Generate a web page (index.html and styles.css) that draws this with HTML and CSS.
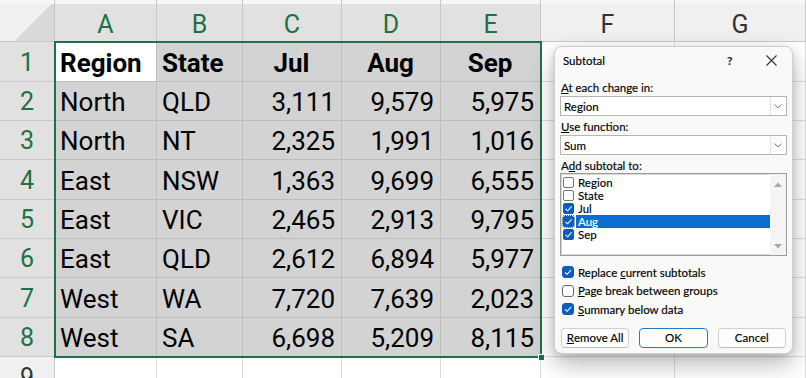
FILE: index.html
```html
<!DOCTYPE html>
<html>
<head>
<meta charset="utf-8">
<link rel="stylesheet" href="styles.css">
</head>
<body>
<div class="sheet">
  <div class="grid">
    <div class="corner"></div>
    <div class="ch">A</div><div class="ch">B</div><div class="ch">C</div><div class="ch">D</div><div class="ch">E</div><div class="ch off">F</div><div class="ch off">G</div>

    <div class="rh">1</div>
    <div class="c act b">Region</div><div class="c b">State</div><div class="c b ctr">Jul</div><div class="c b ctr">Aug</div><div class="c b ctr">Sep</div><div class="e"></div><div class="e"></div>

    <div class="rh">2</div>
    <div class="c">North</div><div class="c">QLD</div><div class="c n">3,111</div><div class="c n">9,579</div><div class="c n">5,975</div><div class="e"></div><div class="e"></div>

    <div class="rh">3</div>
    <div class="c">North</div><div class="c">NT</div><div class="c n">2,325</div><div class="c n">1,991</div><div class="c n">1,016</div><div class="e"></div><div class="e"></div>

    <div class="rh">4</div>
    <div class="c">East</div><div class="c">NSW</div><div class="c n">1,363</div><div class="c n">9,699</div><div class="c n">6,555</div><div class="e"></div><div class="e"></div>

    <div class="rh">5</div>
    <div class="c">East</div><div class="c">VIC</div><div class="c n">2,465</div><div class="c n">2,913</div><div class="c n">9,795</div><div class="e"></div><div class="e"></div>

    <div class="rh">6</div>
    <div class="c">East</div><div class="c">QLD</div><div class="c n">2,612</div><div class="c n">6,894</div><div class="c n">5,977</div><div class="e"></div><div class="e"></div>

    <div class="rh">7</div>
    <div class="c">West</div><div class="c">WA</div><div class="c n">7,720</div><div class="c n">7,639</div><div class="c n">2,023</div><div class="e"></div><div class="e"></div>

    <div class="rh">8</div>
    <div class="c">West</div><div class="c">SA</div><div class="c n">6,698</div><div class="c n">5,209</div><div class="c n">8,115</div><div class="e"></div><div class="e"></div>

    <div class="rh off">9</div>
    <div class="e"></div><div class="e"></div><div class="e"></div><div class="e"></div><div class="e"></div><div class="e"></div><div class="e"></div>
  </div>

  <div class="selection"><span class="handle"></span></div>

  <div class="dlg">
    <div class="dlg-title">
      <span class="dlg-name">Subtotal</span>
      <span class="dlg-help">?</span>
      <svg class="dlg-close" width="11" height="11" viewBox="0 0 11 11"><path d="M0.5 0.5 L10.5 10.5 M10.5 0.5 L0.5 10.5" stroke="#333" stroke-width="1.1" fill="none"/></svg>
    </div>
    <div class="dlg-body">
      <div class="lbl l1"><u>A</u>t each change in:</div>
      <div class="select"><span class="val">Region</span><span class="dd"><svg width="8" height="5" viewBox="0 0 8 5"><path d="M0.5 0.5 L4 4 L7.5 0.5" stroke="#777" stroke-width="1" fill="none"/></svg></span></div>
      <div class="lbl"><u>U</u>se function:</div>
      <div class="select"><span class="val">Sum</span><span class="dd"><svg width="8" height="5" viewBox="0 0 8 5"><path d="M0.5 0.5 L4 4 L7.5 0.5" stroke="#777" stroke-width="1" fill="none"/></svg></span></div>
      <div class="lbl">A<u>d</u>d subtotal to:</div>
      <div class="list">
        <div class="items">
          <div class="item"><span class="cb"></span><span class="txt">Region</span></div>
          <div class="item"><span class="cb"></span><span class="txt">State</span></div>
          <div class="item"><span class="cb on"><svg width="11" height="11" viewBox="0 0 11 11"><path d="M2.5 5.8 L4.6 7.8 L8.6 3.4" stroke="#fff" stroke-width="1.1" fill="none"/></svg></span><span class="txt">Jul</span></div>
          <div class="item"><span class="cb on focus"><svg width="11" height="11" viewBox="0 0 11 11"><path d="M2.5 5.8 L4.6 7.8 L8.6 3.4" stroke="#fff" stroke-width="1.1" fill="none"/></svg></span><span class="txt hl">Aug</span></div>
          <div class="item"><span class="cb on"><svg width="11" height="11" viewBox="0 0 11 11"><path d="M2.5 5.8 L4.6 7.8 L8.6 3.4" stroke="#fff" stroke-width="1.1" fill="none"/></svg></span><span class="txt">Sep</span></div>
        </div>
        <div class="sb">
          <svg width="8" height="5" viewBox="0 0 8 5"><path d="M0 5 L4 0.5 L8 5 Z" fill="#a8a8a8"/></svg>
          <svg width="8" height="5" viewBox="0 0 8 5"><path d="M0 0 L4 4.5 L8 0 Z" fill="#a8a8a8"/></svg>
        </div>
      </div>
      <div class="opts">
        <div class="opt"><span class="cb2 on"><svg width="12" height="12" viewBox="0 0 12 12"><path d="M3 6.3 L5.1 8.3 L9.2 3.9" stroke="#fff" stroke-width="1.1" fill="none"/></svg></span><span>Replace <u>c</u>urrent subtotals</span></div>
        <div class="opt"><span class="cb2"></span><span><u>P</u>age break between groups</span></div>
        <div class="opt"><span class="cb2 on"><svg width="12" height="12" viewBox="0 0 12 12"><path d="M3 6.3 L5.1 8.3 L9.2 3.9" stroke="#fff" stroke-width="1.1" fill="none"/></svg></span><span><u>S</u>ummary below data</span></div>
      </div>
      <div class="btns">
        <div class="btn"><u>R</u>emove All</div>
        <div class="btn primary">OK</div>
        <div class="btn">Cancel</div>
      </div>
    </div>
  </div>
</div>
</body>
</html>
```
FILE: styles.css
```css
* { box-sizing: border-box; }
html, body { margin: 0; padding: 0; }
body {
  width: 806px;
  height: 378px;
  overflow: hidden;
  background: #fff;
  font-family: Roboto, "Liberation Sans", sans-serif;
}
.sheet {
  position: relative;
  width: 806px;
  height: 378px;
  overflow: hidden;
}
.grid {
  display: grid;
  grid-template-columns: 55px 102px 86px 99px 99px 100px 134px 131px;
  grid-template-rows: 42px 40px 39px 39px 40px 39px 39px 40px 39px 40px;
}
.grid > div {
  display: flex;
  align-items: center;
  white-space: nowrap;
  overflow: hidden;
  border-right: 1px solid #dcdcdc;
  border-bottom: 1px solid #dcdcdc;
}
.corner {
  background: linear-gradient(135deg, #f0f0f0 0 58%, #d9d9d9 58%);
  border-color: #c8c8c8 !important;
  box-shadow: inset 0 4px 0 #f6f6f6;
}
.ch {
  justify-content: center;
  background: #e1e1e1;
  color: #1e7145;
  font-size: 25px;
  padding-top: 7px;
  border-color: #c8c8c8 !important;
  box-shadow: inset 0 4px 0 #f6f6f6;
}
.ch.off {
  background: #f0f0f0;
  color: #333;
}
.rh {
  justify-content: center;
  background: #e1e1e1;
  color: #1e7145;
  font-size: 25px;
  padding-top: 1px;
  border-color: #c8c8c8 !important;
}
.rh.off {
  background: #f0f0f0;
  color: #333;
}
.c {
  background: #d3d3d3;
  border-color: #bdbdbd !important;
  color: #000;
  font-size: 26px;
  padding: 2px 6px 0 5px;
}
.c.act { background: #fff; }
.c.n { justify-content: flex-end; }
.c.b { font-weight: 700; }
.c.ctr { justify-content: center; }
.e { background: #fff; }

.selection {
  position: absolute;
  left: 54px;
  top: 41px;
  width: 488px;
  height: 317px;
  border: 2px solid #1e7145;
}
.handle {
  position: absolute;
  right: -5px;
  bottom: -5px;
  width: 7px;
  height: 7px;
  background: #1e7145;
  border: 1px solid #fff;
}

/* dialog */
.dlg {
  position: absolute;
  left: 554px;
  top: 46px;
  width: 239px;
  height: 308px;
  background: #f9f9f8;
  border: 1px solid #cfcfcf;
  border-radius: 8px;
  box-shadow: 0 10px 24px rgba(0,0,0,0.28), 0 2px 6px rgba(0,0,0,0.12);
  font-family: Lato, "Liberation Sans", sans-serif;
  font-size: 11.5px;
  color: #000;
  -webkit-text-stroke: 0.15px #000;
}
.dlg-title {
  display: flex;
  align-items: center;
  height: 27px;
  padding: 0 0 0 8px;
}
.dlg-name { flex: 1; }
.dlg-help {
  width: 12px;
  margin-right: 27px;
  font-weight: 700;
  font-size: 12px;
  color: #333;
}
.dlg-close { margin-right: 15px; }
.dlg-body {
  display: flex;
  flex-direction: column;
  padding: 0 5px 0 5px;
}
.lbl {
  line-height: 14px;
  height: 14px;
  margin-top: 4px;
  padding-left: 1px;
}
.lbl.l1 { margin-top: 7px; }
.select {
  display: flex;
  align-items: center;
  height: 20px;
  margin-top: 1px;
  background: #fff;
  border: 1px solid #b5b5b5;
}
.select .val { flex: 1; padding-left: 3px; }
.select .dd {
  display: flex;
  align-items: center;
  justify-content: center;
  width: 15px;
  height: 18px;
  border-left: 1px solid #e3e3e3;
  margin-right: 1px;
}
.list {
  display: flex;
  height: 83px;
  background: #fff;
  border: 1px solid #9c9c9c;
  box-shadow: inset 0 0 0 1px #d8d8d8;
}
.items {
  flex: 1;
  padding: 2px 0 0 2px;
}
.item {
  display: flex;
  align-items: center;
  height: 13px;
}
.cb {
  display: flex;
  width: 11px;
  height: 11px;
  border: 1px solid #777;
  border-radius: 2px;
  background: #fff;
}
.cb.on {
  background: #0a5cc0;
  border-color: #0a5cc0;
}
.cb svg { margin: -1px; }
.cb.focus { outline: 1px dotted #444; outline-offset: 0; }
.txt {
  padding-left: 4px;
  line-height: 13px;
}
.txt.hl {
  flex: 1;
  margin-left: 2px;
  padding-left: 2px;
  background: #0a6ed1;
  color: #fff;
  -webkit-text-stroke: 0.15px #fff;
}
.sb {
  width: 16px;
  display: flex;
  flex-direction: column;
  align-items: center;
  justify-content: space-between;
  padding: 8px 0 6px 0;
  background: #f4f4f4;
}
.opts {
  display: flex;
  flex-direction: column;
  margin-top: 7px;
}
.opt {
  display: flex;
  align-items: center;
  height: 18.5px;
  padding-left: 2px;
}
.cb2 {
  display: flex;
  width: 12px;
  height: 12px;
  margin-right: 4px;
  border: 1px solid #666;
  border-radius: 3px;
  background: #fff;
}
.cb2.on {
  background: #0a5cc0;
  border-color: #0a5cc0;
}
.cb2 svg { margin: -1px; }
.btns {
  display: flex;
  gap: 10px;
  margin-top: 9px;
  padding: 0 1px;
}
.btn {
  flex: 1;
  height: 20px;
  display: flex;
  align-items: center;
  justify-content: center;
  background: #fefefe;
  border: 1px solid #d0d0d0;
  border-bottom-color: #bdbdbd;
  border-radius: 4px;
}
.btn.primary {
  border: 1.5px solid #2a78c8;
}
```
